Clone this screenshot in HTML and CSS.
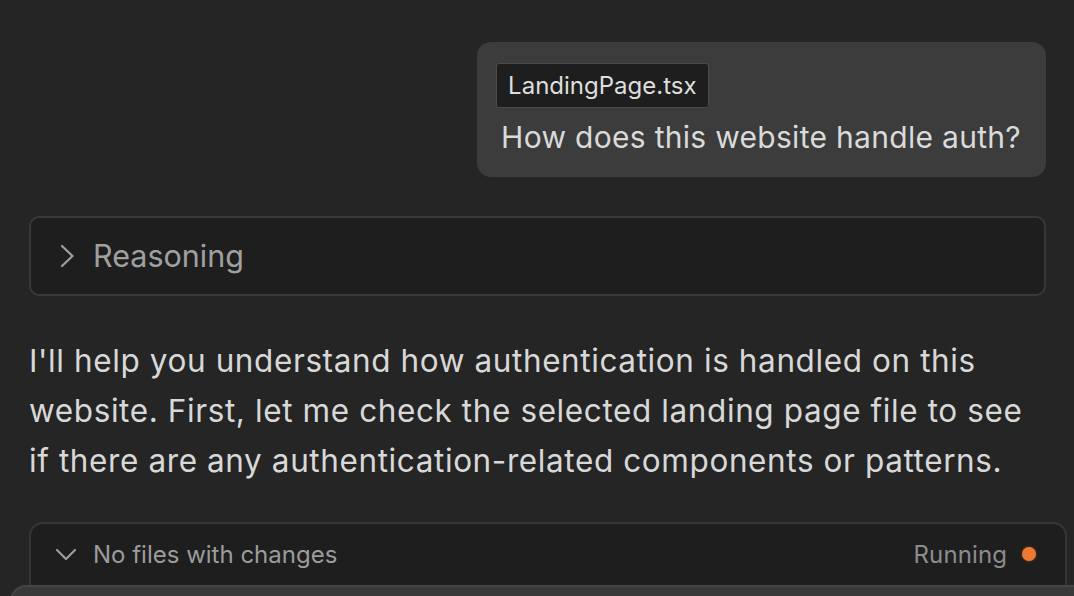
FILE: index.html
```html
<!DOCTYPE html>
<html lang="en">
<head>
<meta charset="utf-8">
<title>Chat</title>
<link rel="stylesheet" href="styles.css">
</head>
<body>
<main class="chat">
  <div class="user-row">
    <div class="bubble">
      <span class="chip">LandingPage.tsx</span>
      <p class="question">How does this website handle auth?</p>
    </div>
  </div>

  <div class="reasoning">
    <svg class="chev-right" width="14" height="24" viewBox="0 0 14 24" aria-hidden="true">
      <path d="M2 2 L12.5 12 L2 22" fill="none" stroke="#a0a0a0" stroke-width="2.2" stroke-linecap="round" stroke-linejoin="round"/>
    </svg>
    <span class="reasoning-label">Reasoning</span>
  </div>

  <p class="answer">I'll help you understand how authentication is handled on this website. First, let me check the selected landing page file to see if there are any authentication-related components or patterns.</p>

  <div class="files">
    <div class="files-head">
      <svg class="chev-down" width="22" height="14" viewBox="0 0 22 14" aria-hidden="true">
        <path d="M2 3 L11 12 L20 3" fill="none" stroke="#9c9c9c" stroke-width="2.2" stroke-linecap="round" stroke-linejoin="round"/>
      </svg>
      <span class="files-label">No files with changes</span>
      <span class="status">Running</span>
      <span class="dot"></span>
    </div>
  </div>
</main>
<div class="composer"></div>
</body>
</html>
```

FILE: styles.css
```css
html, body {
  margin: 0;
  padding: 0;
  height: 100%;
  overflow: hidden;
  background: #252525;
}

body {
  font-family: Inter, "Noto Sans", "Liberation Sans", sans-serif;
  color: #d8d8d8;
  position: relative;
}

.chat {
  display: flex;
  flex-direction: column;
  padding: 42px 28px 0 29px;
}

.user-row {
  display: flex;
  justify-content: flex-end;
}

.bubble {
  background: #3c3c3c;
  border-radius: 14px;
  padding: 21px 25px 0 19px;
  height: 135px;
  box-sizing: border-box;
  display: flex;
  flex-direction: column;
  align-items: flex-start;
}

.chip {
  display: inline-block;
  background: #1e1e1e;
  border: 1px solid #4b4b4b;
  border-radius: 3px;
  height: 45px;
  box-sizing: border-box;
  line-height: 43px;
  padding: 0 11px 0 11px;
  font-size: 24px;
  color: #dedede;
}

.question {
  margin: 9px 0 0 5px;
  font-size: 30px;
  letter-spacing: 0.3px;
  line-height: 40px;
  color: #dadada;
}

.reasoning {
  margin-top: 39px;
  height: 80px;
  box-sizing: border-box;
  background: #1e1e1e;
  border: 2px solid #383838;
  border-radius: 10px;
  display: flex;
  align-items: center;
  padding-left: 29px;
}

.chev-right {
  flex: none;
}

.reasoning-label {
  margin-left: 19px;
  margin-top: -2px;
  font-size: 30.5px;
  color: #a0a0a0;
}

.answer {
  margin: 40px 0 0 0;
  font-size: 31.5px;
  letter-spacing: 0.6px;
  line-height: 50px;
  color: #d8d8d8;
}

.files {
  margin-top: 36px;
  margin-right: -21px;
  background: #1e1e1e;
  border: 2px solid #353535;
  border-bottom: none;
  border-radius: 14px 14px 0 0;
  height: 120px;
}

.files-head {
  height: 60px;
  display: flex;
  align-items: center;
  padding-left: 24px;
  padding-right: 29px;
}

.chev-down {
  flex: none;
}

.files-label {
  margin-left: 16px;
  font-size: 24px;
  color: #9c9c9c;
}

.status {
  margin-left: auto;
  font-size: 24px;
  letter-spacing: 0.1px;
  color: #8c8c8c;
}

.dot {
  flex: none;
  width: 14px;
  height: 14px;
  border-radius: 50%;
  background: #ec7a32;
  box-shadow: 0 0 3px rgba(236, 122, 50, 0.45);
  margin-left: 15px;
}

.composer {
  position: absolute;
  left: 10px;
  right: 0;
  top: 585px;
  height: 40px;
  background: #393939;
  border-top: 2px solid #454545;
  border-left: 2px solid #454545;
  border-radius: 16px 0 0 0;
}
```
